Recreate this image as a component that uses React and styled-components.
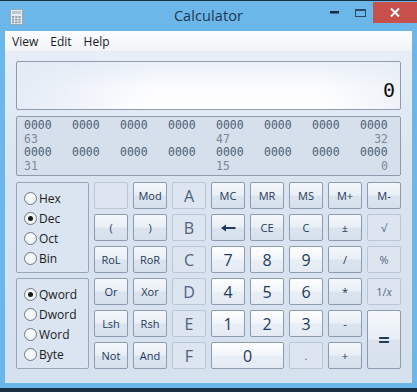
import React from 'react';
import styled, { createGlobalStyle, css } from 'styled-components';

const GlobalStyle = createGlobalStyle`
  html, body {
    margin: 0;
    padding: 0;
    background: #1d2f45;
  }
  body {
    font-family: "Open Sans", "Noto Sans", "Liberation Sans", sans-serif;
  }
`;

const Window = styled.div`
  width: 417px;
  height: 387px;
  margin-top: 1px;
  box-sizing: border-box;
  background: #6cb7ea;
  border: 5px solid #6cb7ea;
  border-top: 0;
  display: flex;
  flex-direction: column;
`;

const TitleBar = styled.div`
  height: 30px;
  position: relative;
  display: flex;
  align-items: center;
  justify-content: center;
  flex-shrink: 0;
`;

const Title = styled.div`
  font-size: 14.5px;
  color: #20364f;
  letter-spacing: 0.1px;
  margin-top: -1px;
`;

const AppIcon = styled.svg`
  position: absolute;
  left: 5px;
  top: 8px;
`;

const Controls = styled.div`
  position: absolute;
  right: -5px;
  top: 1px;
  display: flex;
  align-items: flex-start;
`;

const CtrlBtn = styled.div`
  width: ${p => p.$w}px;
  height: 21px;
  display: flex;
  align-items: center;
  justify-content: center;
  background: ${p => p.$bg || 'transparent'};
`;

const MenuBar = styled.div`
  height: 20px;
  background: linear-gradient(#fbfcfd, #f1f4f8);
  display: flex;
  align-items: center;
  padding-left: 2px;
  flex-shrink: 0;
`;

const MenuItem = styled.span`
  font-size: 12px;
  color: #1b1b1b;
  padding: 0 7px 0 5px;
`;

const Body = styled.div`
  flex: 1;
  background: linear-gradient(#e7eef7, #d9e4f0 40%, #d6e1ee);
  padding: 10px 11px 0 11px;
  display: flex;
  flex-direction: column;
  gap: 6px;
`;

const Display = styled.div`
  height: 49px;
  box-sizing: border-box;
  border: 1px solid #8e9cb0;
  border-radius: 2px;
  background:
    linear-gradient(90deg, rgba(226,234,245,0.9), rgba(255,255,255,0) 35%, rgba(255,255,255,0) 80%, rgba(232,238,246,0.7)),
    linear-gradient(#e9f0f8, #fbfcfe 55%, #ffffff);
  display: flex;
  align-items: flex-end;
  justify-content: flex-end;
  padding: 0 5px 9px 0;
`;

const DisplayValue = styled.span`
  font-family: "DejaVu Sans Mono", "Liberation Mono", monospace;
  font-size: 20px;
  line-height: 20px;
  color: #111;
`;

const Bits = styled.div`
  height: 60px;
  box-sizing: border-box;
  border: 1px solid #8e9cb0;
  border-radius: 2px;
  background: #d5e0ec;
  padding: 2px 0 0 7px;
  display: grid;
  grid-template-columns: repeat(7, 48px) 28px;
  grid-auto-rows: 13.5px;
  font-family: "DejaVu Sans Mono", "Liberation Mono", monospace;
  font-size: 11.5px;
  line-height: 13.5px;
`;

const Nibble = styled.span`
  color: #4d5e73;
`;

const BitIndex = styled.span`
  color: #7b8898;
  grid-column: ${p => p.$col};
  justify-self: ${p => (p.$end ? 'end' : 'start')};
`;

const Pad = styled.div`
  display: grid;
  grid-template-columns: 73px repeat(8, 34px);
  grid-template-rows: repeat(6, 27px);
  gap: 5px;
`;

const RadioPanel = styled.div`
  grid-column: 1;
  grid-row: span 3;
  box-sizing: border-box;
  border: 1px solid #97a6b9;
  border-radius: 2px;
  background: #dbe5f1;
  padding: 9px 0 0 7px;
  display: flex;
  flex-direction: column;
  gap: 8px;
`;

const RadioRow = styled.label`
  display: flex;
  align-items: center;
  height: 12px;
  font-size: 12px;
  color: #1b1b1b;
`;

const RadioDot = styled.span`
  width: 11px;
  height: 11px;
  border-radius: 50%;
  border: 1px solid #6b7a8d;
  background: radial-gradient(circle at 40% 35%, #ffffff, #e8ecf1);
  display: flex;
  align-items: center;
  justify-content: center;
  margin-right: 2px;
  flex-shrink: 0;
  &::after {
    content: '';
    width: 5px;
    height: 5px;
    border-radius: 50%;
    background: ${p => (p.$on ? '#1a1a1a' : 'transparent')};
  }
`;

const variants = {
  func: css`
    border: 1px solid #8c9bb0;
    background: linear-gradient(#f4f7fb, #e9eff6 48%, #dbe4ee 52%, #d6e0ec);
    color: #1e395b;
    font-size: 11px;
  `,
  digit: css`
    border: 1px solid #8c9bb0;
    background: linear-gradient(#fdfeff, #f3f6fb 48%, #e9eff6 52%, #e4ebf4);
    color: #1e395b;
    font-size: 16px;
  `,
  off: css`
    border: 1px solid #b9c6d6;
    background: #dce5f0;
    color: #52667f;
    font-size: 11px;
  `,
  hex: css`
    border: 1px solid #b9c6d6;
    background: #dce5f0;
    color: #4c627e;
    font-size: 16px;
  `,
};

const Key = styled.div`
  box-sizing: border-box;
  border-radius: 2px;
  display: flex;
  align-items: center;
  justify-content: center;
  grid-column: span ${p => p.$cols || 1};
  grid-row: span ${p => p.$rows || 1};
  ${p => variants[p.$v || 'func']}
  ${p => p.$big && css`font-size: 20px; font-weight: 700;`}
`;

const Recip = styled.span`
  font-size: 11px;
  i {
    font-family: "Liberation Serif", serif;
    font-size: 12px;
  }
`;

const Backspace = () => (
  <svg width="16" height="8" viewBox="0 0 16 8">
    <path d="M1 4 L6 0.5 L6 3 L15.5 3 L15.5 5 L6 5 L6 7.5 Z" fill="#1e395b" />
  </svg>
);

const keys = [
  [
    ['', 'off'], ['Mod'], ['A', 'hex'], ['MC'], ['MR'], ['MS'], ['M+'], ['M-'],
  ],
  [
    ['('], [')'], ['B', 'hex'], ['back'], ['CE'], ['C'], ['±'], ['√', 'off'],
  ],
  [
    ['RoL'], ['RoR'], ['C', 'hex'], ['7', 'digit'], ['8', 'digit'], ['9', 'digit'], ['/'], ['%', 'off'],
  ],
  [
    ['Or'], ['Xor'], ['D', 'hex'], ['4', 'digit'], ['5', 'digit'], ['6', 'digit'], ['*'], ['recip', 'off'],
  ],
  [
    ['Lsh'], ['Rsh'], ['E', 'hex'], ['1', 'digit'], ['2', 'digit'], ['3', 'digit'], ['-'], ['=', 'func', 1, 2],
  ],
  [
    ['Not'], ['And'], ['F', 'hex'], ['0', 'digit', 2], ['.', 'off'], ['+'],
  ],
];

const bases = [['Hex'], ['Dec', true], ['Oct'], ['Bin']];
const words = [['Qword', true], ['Dword'], ['Word'], ['Byte']];

const renderKey = ([label, v, cols, rows], i) => {
  let content = label;
  if (label === 'back') content = <Backspace />;
  if (label === 'recip') content = <Recip>1/<i>x</i></Recip>;
  return (
    <Key key={i} $v={v} $cols={cols} $rows={rows} $big={label === '='}>
      {content}
    </Key>
  );
};

const Radios = ({ items }) => (
  <RadioPanel>
    {items.map(([name, on]) => (
      <RadioRow key={name}>
        <RadioDot $on={on} />
        {name}
      </RadioRow>
    ))}
  </RadioPanel>
);

const BitRow = () =>
  Array.from({ length: 8 }).map((_, i) => <Nibble key={i}>0000</Nibble>);

export default function App() {
  return (
    <>
      <GlobalStyle />
      <Window>
        <TitleBar>
          <AppIcon width="13" height="16" viewBox="0 0 13 16">
            <rect x="0.5" y="0.5" width="12" height="15" rx="1" fill="#e9eef3" stroke="#9aa7b5" />
            <rect x="2" y="2" width="9" height="3" fill="#b9c8d6" />
            {[0, 1, 2].map(r =>
              [0, 1, 2].map(c => (
                <rect key={`${r}${c}`} x={2 + c * 3.2} y={7 + r * 2.7} width="2.2" height="1.8" fill="#8c9aa8" />
              ))
            )}
          </AppIcon>
          <Title>Calculator</Title>
          <Controls>
            <CtrlBtn $w={26}>
              <svg width="9" height="3"><rect width="9" height="2.5" fill="#1d2b3a" /></svg>
            </CtrlBtn>
            <CtrlBtn $w={26}>
              <svg width="11" height="8"><rect x="0.5" y="0.5" width="10" height="7" fill="none" stroke="#2f4a66" /><rect x="0.5" y="0.5" width="10" height="1.5" fill="#2f4a66" /></svg>
            </CtrlBtn>
            <CtrlBtn $w={44} $bg="#c8504b">
              <svg width="10" height="9" viewBox="0 0 10 9">
                <path d="M1 0.5 L9 8.5 M9 0.5 L1 8.5" stroke="#fff" strokeWidth="2" />
              </svg>
            </CtrlBtn>
          </Controls>
        </TitleBar>
        <MenuBar>
          <MenuItem>View</MenuItem>
          <MenuItem>Edit</MenuItem>
          <MenuItem>Help</MenuItem>
        </MenuBar>
        <Body>
          <Display>
            <DisplayValue>0</DisplayValue>
          </Display>
          <Bits>
            <BitRow />
            <BitIndex $col={1}>63</BitIndex>
            <BitIndex $col={5}>47</BitIndex>
            <BitIndex $col={8} $end>32</BitIndex>
            <BitRow />
            <BitIndex $col={1}>31</BitIndex>
            <BitIndex $col={5}>15</BitIndex>
            <BitIndex $col={8} $end>0</BitIndex>
          </Bits>
          <Pad>
            <Radios items={bases} />
            {keys[0].map(renderKey)}
            {keys[1].map(renderKey)}
            {keys[2].map(renderKey)}
            <Radios items={words} />
            {keys[3].map(renderKey)}
            {keys[4].map(renderKey)}
            {keys[5].map(renderKey)}
          </Pad>
        </Body>
      </Window>
    </>
  );
}
